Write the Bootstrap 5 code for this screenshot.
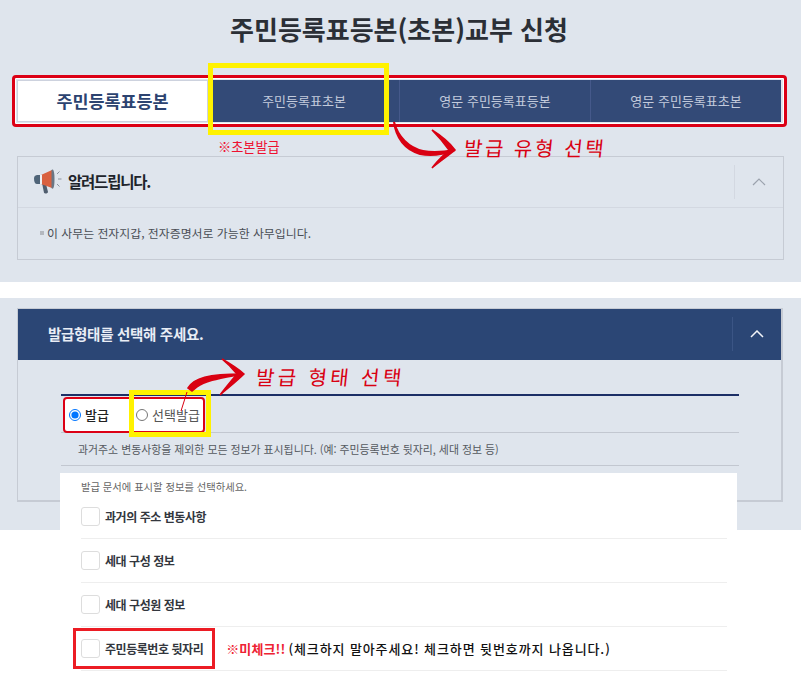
<!DOCTYPE html>
<html lang="ko">
<head>
<meta charset="utf-8">
<title>주민등록표등본(초본)교부 신청</title>
<link href="https://cdn.jsdelivr.net/npm/bootstrap@5.3.0/dist/css/bootstrap.min.css" rel="stylesheet">
<style>
html,body{margin:0;background:#fff;}
body{font-family:"Noto Sans CJK KR","Noto Sans",sans-serif;color:#333;overflow:hidden;}
.canvas{position:relative;width:801px;height:683px;overflow:hidden;}
.band-one{height:282px;background:#dfe5ed;padding:0 17px;}
.page-title{height:63px;line-height:58px;margin:0;padding-right:3px;font-size:26px;font-weight:700;color:#2b2f36;text-align:center;}
.tab-row{margin:17px 0 0;height:42px;width:765px;}
.tab-row .nav-link{width:191px;height:42px;display:flex;align-items:center;justify-content:center;background:#334a77;color:#c3cbdc;font-size:13px;padding:0;border-left:1px solid #45598a;border-radius:0;}
.tab-row .nav-link.on{background:#fff;color:#2c4370;font-size:17.4px;font-weight:700;border:1px solid #cdd2de;}
.tab-note{height:34px;padding:16px 0 0 201px;font-size:13.2px;line-height:17px;color:#ee1130;}
.notice{height:104px;margin:0;border:1.5px solid #c6cbd4;background:transparent;}
.notice-head{height:51px;border-bottom:1px solid #d3d8e1;padding:0 0 0 15px;}
.notice-title{font-size:15.5px;font-weight:700;color:#20242b;letter-spacing:-1.2px;margin-left:5px;}
.fold{width:49px;height:34px;border-left:1px solid #d3d8e1;}
.notice-text{padding:16px 0 0 22px;font-size:11.9px;line-height:18px;color:#4a4e55;}
.dot{width:4px;height:4px;background:#b4b8bf;margin-right:3px;}
.gap-band{height:16px;}
.band-two{height:232px;background:#dfe5ed;padding:10px 18px 0 17px;}
.form-panel{height:194px;border:1px solid #c6cbd4;border-width:1px 2px 2px 1px;border-radius:0;background:transparent;}
.form-head{height:51px;background:#2b4675;padding:0 0 2px 30px;font-size:14.5px;font-weight:700;color:#e9edf5;letter-spacing:-.3px;margin:0;}
.form-head .fold{border-left-color:#3b5585;height:34px;}
.form-body{padding:34px 0 0 43px;width:721px;}
.kind-row{height:39px;border-top:2px solid #1c2f66;border-bottom:1px solid #c2c7d0;padding:1px 0 0 2px;}
.kind-box{width:142px;height:36px;background:#fff;border:2px solid #dc0015;border-radius:4px;padding-left:4px;}
.kind-box label{font-size:13px;color:#555;margin:0;}
.kind-box label.on{color:#222;font-weight:500;}
.native-radio{width:12px;height:12px;margin:0 4px 0 0;flex:none;}
.kind-first{width:67px;}
.kind-desc{height:33px;border-bottom:1px solid #c2c7d0;padding-left:17px;font-size:10.9px;line-height:33px;color:#55595f;}
.pick-panel{position:relative;margin:-57px 0 0 60px;width:677px;background:#fff;padding:6px 10px 0 21px;}
.pick-hint{font-size:10.3px;line-height:16px;color:#666;height:16px;}
.pick-row{height:44px;border-bottom:1px solid #eee;font-size:12px;font-weight:700;color:#33373e;letter-spacing:-.45px;}
.pick-row .form-check-input{width:19px;height:19px;margin:0 5px 0 0;float:none;border:1px solid #ddd;border-radius:3px;}
.warn{margin-left:23px;font-size:13px;font-weight:500;color:#111;letter-spacing:.9px;}
.warn b{color:#ee2233;font-weight:700;margin-right:3px;letter-spacing:.1px;}
.frame-box{position:absolute;pointer-events:none;}
.red-frame{border:3px solid #dc0015;border-radius:4px;}
.yellow-frame{border:5px solid #fff200;}
.tabs-frame{left:12px;top:75px;width:775px;height:52px;box-shadow:inset 0 0 0 1px #fff;}
.tab-yellow{left:208px;top:63px;width:181px;height:72px;}
.kind-yellow{left:129px;top:390px;width:82px;height:47px;}
.rear-frame{left:73px;top:628px;width:142px;height:41px;border-color:#ec1c24;border-radius:0;}
.scribble{position:absolute;font-size:20px;line-height:24px;font-weight:400;color:#d90012;white-space:nowrap;transform:skewX(-6deg);letter-spacing:2.6px;}
.scribble-one{left:464px;top:136px;}
.scribble-two{left:256px;top:365px;letter-spacing:3.4px;}
.strokes{position:absolute;left:0;top:0;}
</style>
</head>
<body>
<div class="canvas">
  <section class="band-one">
    <h1 class="page-title">주민등록표등본(초본)교부 신청</h1>
    <nav class="nav flex-nowrap tab-row">
      <a class="nav-link on" href="#">주민등록표등본</a>
      <a class="nav-link" href="#">주민등록표초본</a>
      <a class="nav-link" href="#">영문 주민등록표등본</a>
      <a class="nav-link" href="#">영문 주민등록표초본</a>
    </nav>
    <div class="tab-note">※초본발급</div>
    <div class="card rounded-0 notice">
      <div class="notice-head d-flex align-items-center">
        <svg width="30" height="28" viewBox="0 0 30 28" aria-hidden="true">
          <path d="M9 15l4 1 2 8c.2 1.400-3.400 2.200-4 .8z" fill="#4f5d6e"/>
          <path d="M1 10.500c0-2 1-3.200 3-3.500h4v9H4c-2 0-3-2-3-5.500z" fill="#4f6478"/>
          <path d="M8 7l11-5v18L8 16z" fill="#d9603f"/>
          <path d="M7 7h2v9H7z" fill="#eef0f3"/>
          <path d="M18.500 2c1.500-1.600 3 0 3 9s-1.500 11-3 9z" fill="#6a7684"/>
          <path d="M24 6l2.500-2.500M25 11h3.500M24 16l2.500 2.500" stroke="#8a93a0" stroke-width="1" fill="none"/>
        </svg>
        <span class="notice-title">알려드립니다.</span>
        <div class="fold ms-auto d-flex align-items-center justify-content-center">
          <svg width="14" height="8" viewBox="0 0 14 8" aria-hidden="true"><path d="M1 7l6-6 6 6" fill="none" stroke="#9ba2ad" stroke-width="1.200"/></svg>
        </div>
      </div>
      <div class="notice-text d-flex align-items-center"><span class="dot"></span><span>이 사무는 전자지갑, 전자증명서로 가능한 사무입니다.</span></div>
    </div>
  </section>
  <div class="gap-band"></div>
  <section class="band-two">
    <div class="card form-panel">
      <div class="form-head d-flex align-items-center">
        <span>발급형태를 선택해 주세요.</span>
        <div class="fold ms-auto d-flex align-items-center justify-content-center">
          <svg width="14" height="8" viewBox="0 0 14 8" aria-hidden="true"><path d="M1 7l6-6 6 6" fill="none" stroke="#f2f4f8" stroke-width="1.500"/></svg>
        </div>
      </div>
      <div class="form-body">
        <div class="kind-row">
          <div class="kind-box d-flex align-items-center">
            <div class="d-flex align-items-center kind-first">
              <input class="native-radio" type="radio" name="kind" id="k1" checked>
              <label class="on" for="k1">발급</label>
            </div>
            <div class="d-flex align-items-center">
              <input class="native-radio" type="radio" name="kind" id="k2">
              <label for="k2">선택발급</label>
            </div>
          </div>
        </div>
        <div class="kind-desc">과거주소 변동사항을 제외한 모든 정보가 표시됩니다. (예: 주민등록번호 뒷자리, 세대 정보 등)</div>
      </div>
    </div>
  </section>
  <div class="pick-panel">
    <div class="pick-hint">발급 문서에 표시할 정보를 선택하세요.</div>
    <div class="pick-row d-flex align-items-center"><input class="form-check-input" type="checkbox" id="c1"><label for="c1">과거의 주소 변동사항</label></div>
    <div class="pick-row d-flex align-items-center"><input class="form-check-input" type="checkbox" id="c2"><label for="c2">세대 구성 정보</label></div>
    <div class="pick-row d-flex align-items-center"><input class="form-check-input" type="checkbox" id="c3"><label for="c3">세대 구성원 정보</label></div>
    <div class="pick-row d-flex align-items-center"><input class="form-check-input" type="checkbox" id="c4"><label for="c4">주민등록번호 뒷자리</label><span class="warn"><b>※미체크!!</b>(체크하지 말아주세요! 체크하면 뒷번호까지 나옵니다.)</span></div>
  </div>

  <div class="frame-box red-frame tabs-frame"></div>
  <div class="frame-box yellow-frame tab-yellow"></div>
  <div class="frame-box yellow-frame kind-yellow"></div>
  <div class="frame-box red-frame rear-frame"></div>
  <svg class="strokes" width="801" height="683" viewBox="0 0 801 683" aria-hidden="true">
    <path d="M394 122C398 137 409 148 423 151C433 153 444 152 455 150C442 155 430 156 420 154C405 150 396 138 394 122z" fill="#d90012" stroke="#d90012" stroke-width="2"/>
    <path d="M432 130C440 135 449 142 455 150C448 156 439 162 432 168C438 160 444 155 449 150C444 143 438 136 432 130z" fill="#d90012" stroke="#d90012" stroke-width="1.500"/>
    <path d="M188 388C194 378 208 374 243 374C222 378 206 380 197 387L192 391z" fill="#d90012" stroke="#d90012" stroke-width="1.500"/>
    <path d="M222 359C229 363 237 368 244 374C237 381 228 388 220 395C226 387 232 380 237 374C232 368 227 363 222 359z" fill="#d90012" stroke="#d90012" stroke-width="1.500"/>
    <path d="M187 392L181 411" stroke="#d90012" stroke-width="1" fill="none"/>
  </svg>
  <span class="scribble scribble-one">발급 유형 선택</span>
  <span class="scribble scribble-two">발급 형태 선택</span>
</div>
<script src="https://cdn.jsdelivr.net/npm/bootstrap@5.3.0/dist/js/bootstrap.bundle.min.js"></script>
</body>
</html>
